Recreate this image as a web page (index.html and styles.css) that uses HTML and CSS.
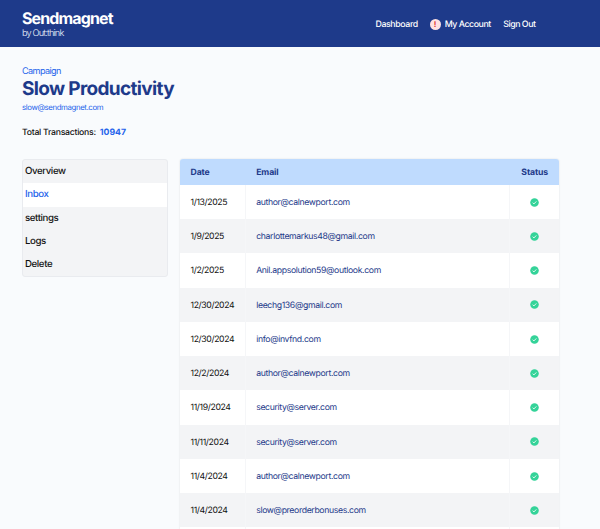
FILE: index.html
```html
<!DOCTYPE html>
<html lang="en">
<head>
<meta charset="utf-8">
<title>Sendmagnet</title>
<link rel="stylesheet" href="styles.css">
</head>
<body>
<svg class="defs" width="0" height="0"><symbol id="check" viewBox="0 0 20 20"><circle cx="10" cy="10" r="9.5" fill="#34d399"/><path d="M5.9 10.4l2.8 2.8 5.3-5.6" fill="none" stroke="#f0fdf4" stroke-width="2"/></symbol></svg>
<header class="topbar">
  <div class="brand"><div class="name">Sendmagnet</div><div class="by">by Out:think</div></div>
  <nav class="nav"><a>Dashboard</a><a class="account"><span class="alert">!</span><span>My Account</span></a><a>Sign Out</a></nav>
</header>
<main>
  <div class="label">Campaign</div>
  <h1>Slow Productivity</h1>
  <div class="address">slow@sendmagnet.com</div>
  <div class="total">Total Transactions: <b>10947</b></div>
  <div class="content">
    <aside class="menu"><a>Overview</a><a class="active">Inbox</a><a>settings</a><a>Logs</a><a>Delete</a></aside>
    <section class="table">
      <div class="row head"><span>Date</span><span>Email</span><span>Status</span></div>
      <div class="row"><span>1/13/2025</span><span>author@calnewport.com</span><span><svg><use href="#check"/></svg></span></div>
      <div class="row"><span>1/9/2025</span><span>charlottemarkus48@gmail.com</span><span><svg><use href="#check"/></svg></span></div>
      <div class="row"><span>1/2/2025</span><span>Anil.appsolution59@outlook.com</span><span><svg><use href="#check"/></svg></span></div>
      <div class="row"><span>12/30/2024</span><span>leechg136@gmail.com</span><span><svg><use href="#check"/></svg></span></div>
      <div class="row"><span>12/30/2024</span><span>info@invfnd.com</span><span><svg><use href="#check"/></svg></span></div>
      <div class="row"><span>12/2/2024</span><span>author@calnewport.com</span><span><svg><use href="#check"/></svg></span></div>
      <div class="row"><span>11/19/2024</span><span>security@server.com</span><span><svg><use href="#check"/></svg></span></div>
      <div class="row"><span>11/11/2024</span><span>security@server.com</span><span><svg><use href="#check"/></svg></span></div>
      <div class="row"><span>11/4/2024</span><span>author@calnewport.com</span><span><svg><use href="#check"/></svg></span></div>
      <div class="row"><span>11/4/2024</span><span>slow@preorderbonuses.com</span><span><svg><use href="#check"/></svg></span></div>
      <div class="row last"></div>
    </section>
  </div>
</main>
</body>
</html>
```
FILE: styles.css
```css
* { box-sizing: border-box; }
html, body { height: 100%; }
body { margin: 0; overflow: hidden; background: #f9fbfd; color: #111; font-family: Inter, sans-serif; text-rendering: geometricPrecision; }
.defs { display: none; }
.topbar { height: 47.3px; background: #1e3a8a; color: #fff; display: flex; justify-content: space-between; padding: 0 64.5px 0 22px; }
.brand { padding-top: 9px; }
.name { font-size: 16px; line-height: 18px; font-weight: 700; letter-spacing: -.87px; }
.by { font-size: 9.2px; line-height: 13px; font-weight: 300; letter-spacing: -.82px; color: #eff6ff; }
.nav { display: flex; align-items: center; gap: 12.4px; padding-top: 1.5px; font-size: 8.8px; font-weight: 500; letter-spacing: -.46px; }
.nav a:first-child { margin-right: -.5px; letter-spacing: -.4px; }
.account { display: flex; align-items: center; gap: 4px; }
.alert { width: 11px; height: 11px; border-radius: 50%; background: #fee2e2; color: #dc2626; font-size: 8px; line-height: 11px; text-align: center; font-weight: 600; letter-spacing: 0; }
main { height: calc(100% - 47.3px); overflow: hidden; padding: 18.7px 41px 0 22px; }
.label { font-size: 9.1px; line-height: 12px; color: #2563eb; letter-spacing: -.6px; }
h1 { margin: -1px 0 0; font-size: 19px; line-height: 23px; font-weight: 700; letter-spacing: -.67px; color: #1e3a8a; }
.address { margin-top: 1.5px; font-size: 7.8px; line-height: 12px; color: #2563eb; letter-spacing: -.38px; }
.total { margin-top: 13.5px; font-size: 8.7px; line-height: 13px; font-weight: 500; letter-spacing: -.27px; }
.total b { margin-left: 2px; color: #2563eb; font-weight: 700; letter-spacing: 0; }
.content { margin-top: 19.4px; display: flex; align-items: flex-start; gap: 12.5px; }
.menu { width: 145.5px; border: 1px solid #e9ebef; border-radius: 3px; background: #f3f4f6; font-size: 9.7px; font-weight: 500; overflow: hidden; }
.menu a { display: block; height: 23.1px; line-height: 24.4px; padding-left: 2px; letter-spacing: -.42px; }
.menu .active { background: #fff; color: #2563eb; }
.table { flex: 1; border-radius: 3px 3px 0 0; overflow: hidden; font-size: 8.7px; box-shadow: 0 0 2px rgba(0,0,0,.12); }
.row { display: grid; grid-template-columns: 66px 1fr 48.6px; align-items: stretch; height: 34.25px; line-height: 36.25px; background: #fff; }
.row:nth-child(odd) { background: #f3f4f6; }
.row span { padding-left: 10.2px; border-right: 1px solid #f5f6f8; }
.row span:first-child { padding-left: 10.5px; letter-spacing: -.38px; }
.row span:nth-child(2) { color: #1e3a8a; letter-spacing: -.36px; }
.row span:last-child { display: flex; align-items: center; justify-content: center; height: 34.25px; padding: 0; border: 0; }
.row svg { width: 9px; height: 9px; }
.row.head { height: 25.5px; line-height: 29px; background: #bfdbfe; color: #1e3a8a; }
.row.head span, .row.head span:nth-child(n) { height: 25.5px; font-weight: 700; border: 0; letter-spacing: -.12px; }
.row.head span:last-child { display: block; text-align: center; }
```
